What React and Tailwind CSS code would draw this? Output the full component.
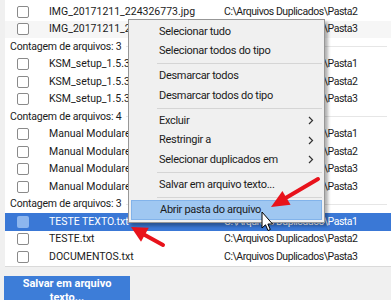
import React from 'react';

const rows = [
    { name: 'IMG_20171211_224326773.jpg', path: 'Pasta2' },
    { name: 'IMG_20171211_224326773.jpg', path: 'Pasta3', alt: true },
    { header: 'Contagem de arquivos: 3' },
    { name: 'KSM_setup_1.5.3.1.exe', path: 'Pasta1' },
    { name: 'KSM_setup_1.5.3.1.exe', path: 'Pasta2' },
    { name: 'KSM_setup_1.5.3.1.exe', path: 'Pasta3' },
    { header: 'Contagem de arquivos: 4' },
    { name: 'Manual Modulare 1.pdf', path: 'Pasta1' },
    { name: 'Manual Modulare 1.pdf', path: 'Pasta2' },
    { name: 'Manual Modulare 1.pdf', path: 'Pasta3' },
    { name: 'Manual Modulare 1.pdf', path: 'Pasta3' },
    { header: 'Contagem de arquivos: 3' },
    { name: 'TESTE TEXTO.txt', path: 'Pasta1', selected: true },
    { name: 'TESTE.txt', path: 'Pasta2' },
    { name: 'DOCUMENTOS.txt', path: 'Pasta3' },
];

const menu = [
    { label: 'Selecionar tudo' },
    { label: 'Selecionar todos do tipo' },
    { sep: true },
    { label: 'Desmarcar todos' },
    { label: 'Desmarcar todos do tipo' },
    { sep: true },
    { label: 'Excluir', sub: true },
    { label: 'Restringir a', sub: true },
    { label: 'Selecionar duplicados em', sub: true },
    { sep: true },
    { label: 'Salvar em arquivo texto...' },
    { sep: true },
    { label: 'Abrir pasta do arquivo', active: true },
];

const Row = ({ row }) => {
    if (row.header) {
        return (
            <div className="h-[17.5px] flex items-center pl-[5px] pr-1 gap-1">
                <span className="whitespace-nowrap tracking-[-0.2px]">{row.header}</span>
                <div className="flex-1 h-px bg-[#e6e6e6]" />
            </div>
        );
    }
    return (
        <div
            className={
                'h-[17.5px] flex items-center ' +
                (row.selected ? 'bg-[#3a78d6] text-white' : row.alt ? 'bg-[#f6f6f6]' : '')
            }
        >
            <div className="w-[12px] shrink-0" />
            <div
                className={
                    'w-[12px] h-[12px] shrink-0 rounded-[2px] ' +
                    (row.selected ? 'bg-[#8db6ee]' : 'border border-[#8a8a8a] bg-white')
                }
            />
            <div className="w-[195px] shrink-0 pl-[20px] pr-2 whitespace-nowrap overflow-hidden">{row.name}</div>
            <div className="whitespace-nowrap tracking-[-0.45px]">C:\Arquivos Duplicados\{row.path}</div>
        </div>
    );
};

const App = () => {
    return (
        <div className="relative w-[391px] h-[300px] overflow-hidden bg-[#f0f0f0] text-[#1b1b1b] font-['Roboto',sans-serif]">
            <div className="ml-[5px] bg-white pt-[3px] border-b border-[#dadada] text-[10.5px]">
                {rows.map((r, i) => (
                    <Row key={i} row={r} />
                ))}
            </div>

            <div className="ml-[4px] mt-[9px] w-[126px] h-[40px] bg-[#3d7dd8] text-white font-bold text-[11px] text-center leading-[14px] pt-[1px]">
                Salvar em arquivo
                <br />
                texto...
            </div>

            {/* context menu */}
            <div className="absolute left-[128px] top-[19px] w-[197px] bg-[#f0f0f0] border border-[#979797] shadow-[3px_3px_3px_rgba(0,0,0,0.3)] py-[2px] text-[11px] tracking-[-0.3px]">
                {menu.map((m, i) =>
                    m.sep ? (
                        <div key={i} className="h-[5.5px] flex items-center pl-[28px] pr-[2px]">
                            <div className="flex-1 h-px bg-[#d5d5d5]" />
                        </div>
                    ) : (
                        <div
                            key={i}
                            className={
                                'h-[19.5px] flex items-center pl-[28px] pr-[8px] mx-[2px] ' +
                                (m.active ? 'bg-[#9fc7f1] border border-[#82b3ea]' : '')
                            }
                        >
                            <span className="flex-1 whitespace-nowrap">{m.label}</span>
                            {m.sub && (
                                <svg width="6" height="9" viewBox="0 0 6 9">
                                    <path d="M1 1 L4.5 4.5 L1 8" fill="none" stroke="#333" strokeWidth="1.2" />
                                </svg>
                            )}
                        </div>
                    )
                )}
            </div>

            {/* red arrows + cursor */}
            <svg className="absolute left-0 top-0" width="391" height="300" viewBox="0 0 391 300">
                <line x1="318" y1="179" x2="284" y2="199" stroke="#e8121b" strokeWidth="4" strokeLinecap="round" />
                <polygon points="271,207 290.6,204.7 282.4,190.9" fill="#e8121b" />
                <line x1="163" y1="245" x2="143" y2="234" stroke="#e8121b" strokeWidth="4" strokeLinecap="round" />
                <polygon points="131,227 148.8,227.8 141,241.8" fill="#e8121b" />
                <path
                    d="M262 212 L262 228 L265.5 224.8 L268 230.5 L270.3 229.5 L267.9 224 L272.5 224 Z"
                    fill="#fff"
                    stroke="#000"
                    strokeWidth="1"
                    strokeLinejoin="round"
                />
            </svg>
        </div>
    );
};

export default App;
